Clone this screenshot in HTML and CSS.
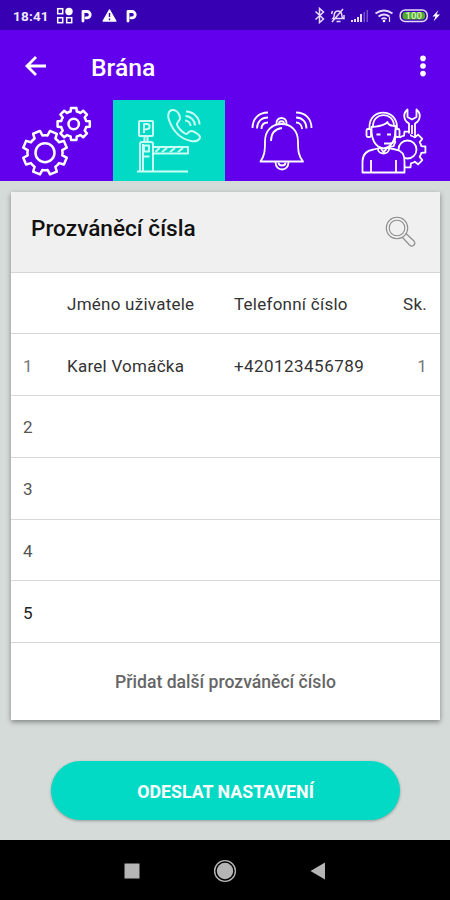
FILE: index.html
```html
<!DOCTYPE html>
<html lang="cs">
<head>
    <meta charset="UTF-8">
    <meta name="viewport" content="width=device-width, initial-scale=1.0">
    <title>Brána</title>
    <link rel="stylesheet" href="styles.css">
</head>
<body>
    <div class="status">
        <span class="time">18:41</span>
        <svg class="status-left" viewBox="55 0 90 30">
            <g fill="none" stroke="#fff" stroke-width="1.5">
                <rect x="57.7" y="8.7" width="5" height="5"/>
                <rect x="57.7" y="17.7" width="5" height="5"/>
                <rect x="66.7" y="17.7" width="5" height="5"/>
            </g>
            <circle cx="69" cy="11.5" r="3.7" fill="#fff"/>
            <g fill="none" stroke="#fff" stroke-width="2.8" stroke-linecap="round" stroke-linejoin="round">
                <path d="M83 21V11.5h4a3.2 3.2 0 0 1 0 6.4h-1"/>
                <path d="M128 21V11.5h4a3.2 3.2 0 0 1 0 6.4h-1"/>
            </g>
            <path d="M109.5 10l6.3 11h-12.6z" fill="#fff" stroke="#fff" stroke-width="1.5" stroke-linejoin="round"/>
            <path d="M109.5 13v4M109.5 18.5v1.7" stroke="#3700b3" stroke-width="1.4"/>
        </svg>
        <svg class="status-right" viewBox="310 0 140 30">
            <g fill="none" stroke="#e6dcfa" stroke-width="1.5">
                <path d="M315.5 11.5l8 7.5-4 3.5v-14l4 3.5-8 7.5"/>
                <path d="M333 18.5c1.5-1.5 1-3 1.5-5 1-3.500 6-3.500 7 0 .5 2 0 3.500 1.500 5zM336.500 21.500h4M332 22L343 9M331.500 14l1-3M344 15v4"/>
                <path d="M375.500 13.500q8.500-6 17 0M378.500 16.500q5.500-4 11 0M381.500 19q2.500-1.800 5 0" stroke-width="1.8"/>
                <path d="M389.500 17v5" stroke-width="1.2"/>
                <rect x="400.2" y="10" width="27" height="11.5" rx="5"/>
            </g>
            <circle cx="384" cy="21" r="1.3" fill="#fff"/>
            <path d="M351 22v-2h2v2zM354 22v-3h2v3zM357 22v-5h2v5zM360 22v-8h2v8z" fill="#e6dcfa"/>
            <path d="M363.500 22V12h1.500v10zM366.500 22V10h1.500v12z" fill="#7650cb"/>
            <rect x="402.5" y="12" width="22.5" height="7.5" rx="3" fill="#53a928"/>
            <text x="413.7" y="19.3" class="battery">100</text>
            <path d="M438.500 10l-6 6.500h3l-2 5 6.500-7h-3.500z" fill="#fff"/>
        </svg>
    </div>

    <header class="appbar">
        <svg class="back" viewBox="0 0 24 24"><path d="M22 12H3.500M12 3L3 12l9 9"/></svg>
        <h1>Brána</h1>
        <svg class="more" viewBox="0 0 8 22"><circle cx="4" cy="3.4" r="2.8"/><circle cx="4" cy="11" r="2.8"/><circle cx="4" cy="18.6" r="2.8"/></svg>
    </header>

    <nav class="tabs">
        <a class="tab gears">
            <svg viewBox="0 100 113 81">
                <defs>
                    <path id="gear" d="M17.470-4.350L22.680-3.800V3.800L17.470 4.350Q17 7 15.430 9.270L18.720 13.360L13.360 18.720L9.270 15.430Q7 17 4.350 17.470L3.800 22.680H-3.800L-4.350 17.470Q-7 17-9.270 15.430L-13.360 18.720L-18.720 13.360L-15.430 9.270Q-17 7-17.470 4.350L-22.680 3.800V-3.800L-17.470-4.350Q-17-7-15.430-9.270L-18.720-13.360L-13.360-18.720L-9.270-15.430Q-7-17-4.350-17.470L-3.800-22.680H3.800L4.350-17.470Q7-17 9.270-15.430L13.360-18.720L18.720-13.360L15.430-9.270Q17-7 17.470-4.350Z" vector-effect="non-scaling-stroke"/>
                </defs>
                <use href="#gear" transform="translate(45 152.7) rotate(22.5) scale(.97)"/>
                <circle cx="45" cy="152.7" r="9.5"/>
                <use href="#gear" transform="translate(73.7 124) scale(.71)"/>
                <circle cx="73.7" cy="124" r="5.2"/>
            </svg>
        </a>
        <a class="tab active">
            <svg viewBox="113 100 112 81">
                <rect x="139" y="121" width="14" height="15" rx="1"/>
                <path d="M144 133v-9h3a2.600 2.600 0 0 1 0 5.200h-3M144.500 136v5M147.500 136v5"/>
                <path d="M140 171v-27q0-2 2-2h9q2 0 2 2v27M143 144v27M137 171.500h51M153 147h35v6.500h-35"/>
                <rect x="144" y="145.5" width="5" height="6"/>
                <path d="M143.500 156.500h6"/>
                <path d="M155.500 152l4-4M162 152l5-4M170 152l5-4M178 152l5-4" stroke-width="2"/>
                <path d="M172 110c-4 1-4.500 6-3 10 4 11 12 19 22 21 5 1 9-1 9-4 0-2-6-6-9-6-2 0-3 3-5 3-3-1-9-7-9-10 0-2 3-3 3-6s-3-9-8-8z"/>
                <path d="M186 111.500c7 0 13.500 6 13.500 13M185.500 116c5 0 9.500 4.500 9.500 9.500M185 120.500c3 0 5.500 2.500 5.500 5.500"/>
            </svg>
        </a>
        <a class="tab">
            <svg viewBox="225 100 112 81">
                <path d="M260.500 161.500c4-6 4.500-10 4.500-20 0-11 7-17.500 16.500-17.500S298 130.500 298 141.500c0 10 .5 14 5 20z"/>
                <path d="M276.500 124c-1-8 11-8 10 0M279 123.500c0-3 5-3 5 0M275.500 162c0 10 13 10 13 0M278.500 162.500c0 4 7 4 7 0"/>
                <path d="M271 141c0-8 4-12 11-13"/>
                <path d="M252.500 128c0-9 6-15.500 15.500-15.500M257 128.500c0-6.500 4-11 11-11M261.500 129c0-4 2.500-6.500 6.500-6.500"/>
                <path d="M311.500 128c0-9-6-15.500-15.500-15.500M306.500 128.500c0-6.500-4-11-10.500-11M302 129c0-4-2.500-6.500-6-6.500"/>
            </svg>
        </a>
        <a class="tab">
            <svg viewBox="337 100 113 81">
                <use href="#gear" transform="translate(407.5 149.5) scale(.79)" class="solid"/>
                <circle cx="407.5" cy="149.5" r="9"/>
                <path class="solid" d="M409 133.500v-10c-5.500-3-6.500-10-1.500-14v7.500l4.500 2.500 4.500-2.500v-7.500c5 4 4 11-1.500 14v13M412 125v9"/>
                <path class="solid" d="M362.500 172.500v-11c0-8 5-11 11-12l6-1.500h9l7 1.500c6 1 9 4 9 12v11zM371 173v-13M396 173v-13"/>
                <path class="solid" d="M371.500 129c0 11 4 18 12 19.500 8-1.500 12-8.500 12-19.500v-3c-8 0-8-4-8-4s-2 4-16 5z"/>
                <path d="M369.500 128c-1-20.500 28-20.500 27.500 0M373 126c0-14.500 21-14.500 21 0M378 149c0 6 11 6 11 0M381 149l2.500 3 3-3M384 143.500h5.500c4 0 6-2 6-7M376.500 134.500h4M387 134.500h4"/>
                <rect class="solid" x="366.5" y="129" width="4.5" height="8" rx="1.5"/>
                <rect class="solid" x="395.5" y="129" width="4" height="8" rx="1.5"/>
            </svg>
        </a>
    </nav>

    <main>
        <section class="card">
            <div class="card-head">
                <h2>Prozváněcí čísla</h2>
                <svg class="search" viewBox="0 0 32 32">
                    <circle cx="12" cy="12" r="10.7"/>
                    <circle cx="12" cy="12" r="7.8"/>
                    <path d="M17.500 21.500l7 7.500c3 3 7-1 4.500-4l-8-7.500"/>
                </svg>
            </div>
            <div class="row">
                <span></span><span>Jméno uživatele</span><span>Telefonní číslo</span><span class="group">Sk.</span>
            </div>
            <div class="row">
                <span class="num light">1</span><span>Karel Vomáčka</span><span class="phone">+420123456789</span><span class="group light">1</span>
            </div>
            <div class="row"><span class="num">2</span></div>
            <div class="row"><span class="num">3</span></div>
            <div class="row"><span class="num">4</span></div>
            <div class="row"><span class="num dark">5</span></div>
            <div class="add">Přidat další prozváněcí číslo</div>
        </section>
        <button class="send">ODESLAT NASTAVENÍ</button>
    </main>

    <footer class="navbar">
        <svg viewBox="0 0 24 24"><path d="M4.500 4.500h15v15h-15z"/></svg>
        <svg viewBox="0 0 24 24"><circle cx="12" cy="12" r="8.2"/><circle cx="12" cy="12" r="10.4" fill="none" stroke="#b5b5b5" stroke-width="1.4"/></svg>
        <svg viewBox="0 0 24 24"><path d="M4.500 12l14.500-8.500v17z"/></svg>
    </footer>
</body>
</html>
```
FILE: styles.css
```css
* {
    box-sizing: border-box;
}

body {
    margin: 0;
    width: 450px;
    height: 900px;
    display: flex;
    flex-direction: column;
    overflow: hidden;
    font-family: Roboto, "Liberation Sans", sans-serif;
    background: #d5dbd9;
}

h1,
h2 {
    margin: 0;
    font-weight: 500;
}

svg {
    display: block;
    flex: none;
}

.status {
    height: 30px;
    display: flex;
    align-items: center;
    background: #3700b3;
    color: #f0eafc;
}

.time {
    width: 42px;
    margin-left: 13px;
    padding-top: 2px;
    font-size: 13.5px;
    font-weight: 700;
    letter-spacing: 0.2px;
}

.status-left {
    width: 90px;
    height: 30px;
}

.status-right {
    width: 140px;
    height: 30px;
    margin-left: auto;
}

.battery {
    fill: #d9f5cf;
    font-size: 9.5px;
    font-weight: 500;
    text-anchor: middle;
}

.appbar {
    height: 70px;
    display: flex;
    align-items: center;
    padding: 0 23px;
    background: #6200ee;
    color: #fff;
}

.back {
    width: 24px;
    height: 24px;
    margin: 1px 43px 0 1px;
    fill: none;
    stroke: #fff;
    stroke-width: 2.8;
}

.appbar h1 {
    flex: 1;
    padding-top: 4px;
    font-size: 24.7px;
}

.more {
    width: 8px;
    height: 22px;
    margin-top: 1px;
    fill: #fff;
}

.tabs {
    height: 81px;
    display: grid;
    grid-template-columns: 113px 112px 112px 113px;
    background: #6200ee;
}

.tab svg {
    width: 100%;
    height: 81px;
    fill: none;
    stroke: #fff;
    stroke-width: 1.8;
    stroke-linejoin: round;
}

.tab .solid {
    fill: #6200ee;
}

.gears svg {
    stroke-width: 2.5;
}

.active {
    background: #03dac5;
}

.active svg {
    stroke: #c9fff5;
    stroke-width: 2;
}

main {
    flex: 1;
    padding: 11px 10px 0 11px;
}

.card {
    background: #fff;
    box-shadow: 0 2px 5px rgba(0, 0, 0, 0.4);
}

.card-head {
    height: 80.5px;
    display: flex;
    align-items: center;
    justify-content: space-between;
    padding: 0 23px 6px 20px;
    background: #f0f0f0;
    border-bottom: 1px solid #d5d5d5;
    color: #111;
}

.card-head h2 {
    font-size: 22.6px;
}

.search {
    width: 32px;
    height: 32px;
    margin-top: 7px;
    fill: none;
    stroke: #8c8c8c;
    stroke-width: 1.1;
}

.row {
    height: 61.8px;
    display: grid;
    grid-template-columns: 44px 167px 1fr 60px;
    align-items: center;
    padding: 2px 13px 0 12px;
    border-bottom: 1px solid #d8d8d8;
    color: #333;
    font-size: 17px;
    letter-spacing: 0.25px;
}

.phone {
    letter-spacing: 0.45px;
}

.group {
    text-align: right;
}

.num {
    color: #555;
}

.light {
    color: #777;
}

.num.dark {
    color: #222;
}

.add {
    height: 77px;
    display: flex;
    align-items: center;
    justify-content: center;
    padding-top: 1px;
    color: #666;
    font-size: 17.6px;
    font-weight: 500;
}

.send {
    display: block;
    width: 349px;
    height: 59px;
    margin: 41px 0 0 40px;
    padding: 2px 0 0;
    border: 0;
    border-radius: 30px;
    background: #03dac5;
    box-shadow: 0 1px 3px rgba(0, 0, 0, 0.3);
    color: #fff;
    font: 700 17.8px Roboto, sans-serif;
}

.navbar {
    height: 60px;
    display: flex;
    align-items: center;
    justify-content: center;
    gap: 69px;
    padding-top: 1px;
    background: #000;
}

.navbar svg {
    width: 24px;
    height: 24px;
    fill: #b5b5b5;
}
```
